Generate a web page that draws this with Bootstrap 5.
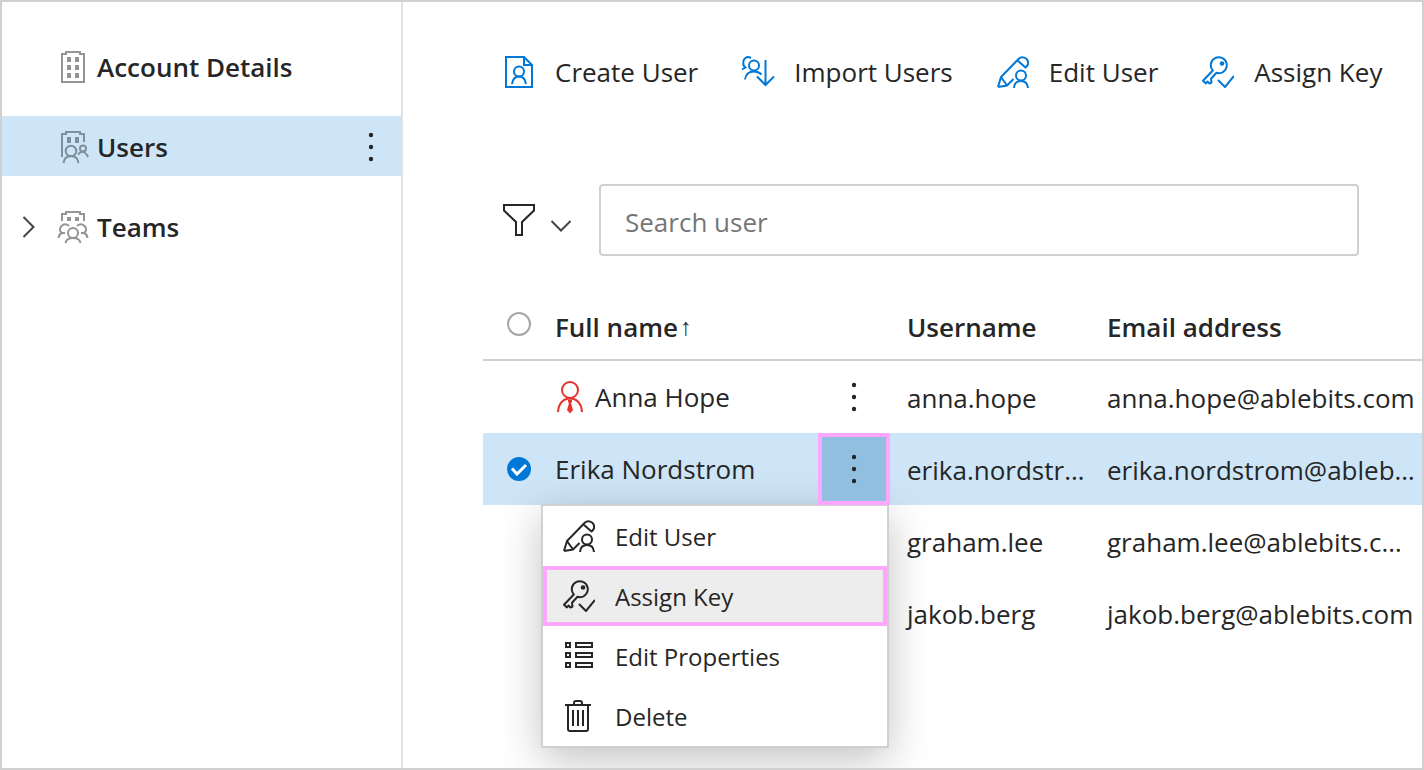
<!DOCTYPE html>
<html lang="en">
<head>
<meta charset="utf-8">
<meta name="viewport" content="width=device-width, initial-scale=1">
<title>Users</title>
<link href="https://cdn.jsdelivr.net/npm/bootstrap@5.3.0/dist/css/bootstrap.min.css" rel="stylesheet">
<style>
  :root { --ink: #262626; --line: #d0d0d0; --accent: #0078d7; --pick: #cde5f7; --mark: #ffa6ff; }
  body { font-family: "Open Sans", "Noto Sans", sans-serif; font-size: 26px; line-height: 36px; color: var(--ink); }
  .app-frame { border: 2px solid var(--line); min-height: 100vh; overflow: hidden; }
  .ico { width: 32px; height: 32px; flex: none; fill: none; stroke: currentColor; stroke-width: 2; overflow: visible; }
  .solid { fill: currentColor; stroke: none; }

  .side-pane { width: 401px; border-right: 2px solid #e2e2e2; padding-top: 34px; gap: 20px; }
  .side-item { height: 60px; padding: 2px 0 0 14px; color: var(--ink); text-decoration: none; font-weight: 600; }
  .side-item .ico { color: #949494; }
  .side-item .twisty { width: 24px; height: 24px; color: #444; margin-right: 17px; }
  .side-item.picked { background: var(--pick); }
  .side-item.picked .ico { color: #7f8f9b; }
  .side-item .label-text { margin-left: 8px; }

  .dots { background: none; border: 0; padding: 0; color: var(--ink); display: flex; align-items: center; justify-content: center; }
  .dots svg { width: 6px; height: 30px; fill: currentColor; }
  .side-row .dots { width: 60px; height: 60px; }

  .main-pane { padding: 44px 0 0 80px; min-width: 0; }
  .tool-bar { padding-left: 20px; gap: 44px; height: 52px; }
  .tool-btn { background: none; border: 0; padding: 0; color: var(--ink); gap: 20px; }
  .tool-btn .ico { color: var(--accent); }

  .filter-row { margin: 86px 63px 0 20px; }
  .filter-btn { background: none; border: 0; padding: 0; color: var(--ink); gap: 16px; width: 96px; }
  .filter-btn .arrow { width: 20px; height: 12px; color: #444; margin-top: 12px; }
  .search-box { height: 72px; border: 2px solid var(--line); border-radius: 4px; padding: 4px 24px 0; font-size: 26px; color: var(--ink); }
  .search-box::placeholder { color: #767676; opacity: 1; }

  .user-table { table-layout: fixed; width: 100%; margin-top: 32px; }
  .user-table th, .user-table td { height: 72px; padding: 0; vertical-align: middle; white-space: nowrap; }
  .user-table th { font-weight: 600; padding-top: 6px; }
  .user-table thead tr { border-bottom: 2px solid var(--line); }
  .user-table tr.picked { background: var(--pick); }
  .col-pick { width: 72px; } .col-name { width: 263px; } .col-menu { width: 72px; } .col-login { width: 217px; }
  .user-table .login { padding-left: 17px; }
  .user-table td.login, .user-table td.mail { padding-top: 2px; }
  .user-table .pick-cell { text-align: center; padding: 0; }
  .pick-cell input { appearance: none; display: block; margin: 0 auto; width: 24px; height: 24px; border: 2px solid #a6a6a6; border-radius: 50%; background: #fff; }
  .pick-cell input:checked { border-color: var(--accent); background: var(--accent) url("data:image/svg+xml,%3Csvg xmlns='http://www.w3.org/2000/svg' viewBox='0 0 20 20'%3E%3Cpath d='M3 9.500l5 5.500 9-9' fill='none' stroke='%23fff' stroke-width='3'/%3E%3C/svg%3E") center / 20px no-repeat; }
  .sort-mark { font-family: "Liberation Sans", sans-serif; font-size: 24px; line-height: 20px; font-weight: 400; margin-left: 2px; }
  .admin-mark { color: #e5332d; }

  .user-table .dots { width: 72px; height: 72px; }
  .dots.open { background: #91bfe0; border: 4px solid var(--mark); position: relative; z-index: 3; }
  .menu-pop { position: absolute; z-index: 2; top: 71px; right: 1px; width: 348px; background: #fff; border: 2px solid var(--line); box-shadow: 0 12px 40px rgba(0,0,0,.24); }
  .menu-pop button { display: flex; align-items: center; width: 100%; height: 60px; padding: 0 20px; gap: 20px; border: 0; background: none; color: var(--ink); font-size: 24px; }
  .menu-pop button span { padding-top: 2px; }
  .menu-pop button.marked { background: #ededed; outline: 4px solid var(--mark); outline-offset: -4px; }
</style>
</head>
<body>
<svg class="d-none" xmlns="http://www.w3.org/2000/svg">
  <symbol id="i-edit" viewBox="0 0 32 32">
    <path d="M1 31L4 21 21.500 3Q25-.5 29.300 2.700 33 7 29.500 10.500L28 12M20.500 4.500l8 7M4 21l6 8.500M1 31l9-1.500 6.500-6.500"/>
    <circle cx="24" cy="19.500" r="5"/><path d="M17 32q.5-7 7-7t7 7"/>
  </symbol>
  <symbol id="i-key" viewBox="0 0 32 32">
    <path d="M10.800 14.500A8 8 0 1 1 17 17.200l-2.500-.4-5.500 6 .5 3.700-2 1-2-2-1.500 2-3-2.800z" stroke-linejoin="round"/>
    <circle cx="20" cy="7.500" r="2.300" class="solid"/><path d="M16 24l7 7L32 20"/>
  </symbol>
  <symbol id="i-dots" viewBox="0 0 6 30"><circle cx="3" cy="3" r="2.200"/><circle cx="3" cy="15" r="2.200"/><circle cx="3" cy="27" r="2.200"/></symbol>
</svg>

<div class="app-frame d-flex">
  <nav class="side-pane d-flex flex-column flex-shrink-0">
    <a href="#" class="side-item d-flex align-items-center">
      <svg class="ico twisty"></svg>
      <svg class="ico" viewBox="0 0 32 32"><path d="M5 31V3h4V1h14v2h4v28z"/><path class="solid" d="M10 6h4v5h-4zM18 6h4v5h-4zM10 14h4v5h-4zM18 14h4v5h-4zM10 22h4v5h-4zM18 22h4v5h-4z"/></svg>
      <span class="label-text">Account Details</span>
    </a>
    <div class="side-row side-item picked d-flex align-items-center">
      <a href="#" class="d-flex align-items-center flex-grow-1 text-reset text-decoration-none">
        <svg class="ico twisty"></svg>
        <svg class="ico" viewBox="0 0 32 32"><path d="M5 26V3h4V1h14v2h4v8"/><path class="solid" d="M10 6h4v6h-4zM18 6h4v6h-4z"/><circle cx="14" cy="20" r="5.300"/><path d="M6.500 32q1-7 7.500-7t7.500 7"/><circle cx="26" cy="17.500" r="3"/><path d="M21 23.500q5-5.500 9 .5l1 2"/></svg>
        <span class="label-text">Users</span>
      </a>
      <button class="dots" type="button" aria-label="More"><svg><use href="#i-dots"/></svg></button>
    </div>
    <a href="#" class="side-item d-flex align-items-center">
      <svg class="ico twisty" viewBox="0 0 24 24"><path d="M7.500 2L17.500 12l-10 10"/></svg>
      <svg class="ico" viewBox="0 0 32 32"><path d="M5 10V3h4V1h14v2h4v7"/><path class="solid" d="M10 6h4v4h-4zM18 6h4v4h-4z"/><circle cx="16" cy="22" r="5"/><path d="M8.500 32q1-5 7.500-5t7.500 5M12 15Q8 11.500 4.500 15t.5 7h3M5 22q-3 1-3.500 5M20 15q4-3.500 7.500 0t-.5 7h-3M27 22q3 1 3.500 5"/></svg>
      <span class="label-text">Teams</span>
    </a>
  </nav>

  <main class="main-pane flex-grow-1">
    <div class="tool-bar d-flex align-items-center text-nowrap">
      <button type="button" class="tool-btn d-flex align-items-center">
        <svg class="ico" viewBox="0 0 32 32"><path d="M3 1h18l8 8v22H3zM21 1v8h8"/><circle cx="16" cy="15.500" r="5"/><path d="M9 28q1-7.500 7-7.500t7 7.500"/></svg>
        <span>Create User</span>
      </button>
      <button type="button" class="tool-btn d-flex align-items-center">
        <svg class="ico" viewBox="0 0 32 32"><path d="M9 2Q4-.5 1.800 4 0 9 3.500 11.500L0 13.500"/><circle cx="12" cy="9.500" r="5"/><path d="M3 23.500q1-8 9-8 4.500 0 7.500 3M23.500 4v25M15 20.500l8.500 8.500 8.500-8.500"/></svg>
        <span>Import Users</span>
      </button>
      <button type="button" class="tool-btn d-flex align-items-center"><svg class="ico"><use href="#i-edit"/></svg><span>Edit User</span></button>
      <button type="button" class="tool-btn d-flex align-items-center"><svg class="ico"><use href="#i-key"/></svg><span>Assign Key</span></button>
    </div>

    <div class="filter-row d-flex align-items-center">
      <button type="button" class="filter-btn d-flex align-items-center flex-shrink-0" aria-label="Filter">
        <svg class="ico" viewBox="0 0 32 32"><path d="M1 1h30v5.500L19 18v13h-6V18L1 6.500z"/></svg>
        <svg class="ico arrow" viewBox="0 0 20 12"><path d="M.5 1L10 10.500 19.500 1"/></svg>
      </button>
      <input type="text" class="search-box w-100" placeholder="Search user" aria-label="Search user">
    </div>

    <table class="user-table">
      <colgroup><col class="col-pick"><col class="col-name"><col class="col-menu"><col class="col-login"><col></colgroup>
      <thead>
        <tr>
          <th class="pick-cell"><input type="checkbox" aria-label="Select all"></th>
          <th><div class="d-flex align-items-center">Full name<span class="sort-mark">↑</span></div></th>
          <th></th>
          <th class="login">Username</th>
          <th>Email address</th>
        </tr>
      </thead>
      <tbody>
        <tr>
          <td></td>
          <td><div class="d-flex align-items-center gap-2"><svg class="ico admin-mark" viewBox="0 0 32 32"><circle cx="15" cy="9" r="8"/><path d="M3 31Q4 18 15 17.500 26 18 27 31"/><path class="solid" d="M13 19h4v2l-1 1 2 7-3 3.500-3-3.500 2-7-1-1z"/></svg><span>Anna Hope</span></div></td>
          <td><button class="dots" type="button" aria-label="More"><svg><use href="#i-dots"/></svg></button></td>
          <td class="login">anna.hope</td>
          <td class="mail">anna.hope@ablebits.com</td>
        </tr>
        <tr class="picked">
          <td class="pick-cell"><input type="checkbox" checked aria-label="Select Erika Nordstrom"></td>
          <td>Erika Nordstrom</td>
          <td class="position-relative">
            <button class="dots open" type="button" aria-label="More"><svg><use href="#i-dots"/></svg></button>
            <div class="menu-pop">
              <button type="button"><svg class="ico"><use href="#i-edit"/></svg><span>Edit User</span></button>
              <button type="button" class="marked"><svg class="ico"><use href="#i-key"/></svg><span>Assign Key</span></button>
              <button type="button"><svg class="ico" viewBox="0 0 32 32"><path d="M3 3h4v4H3zM13 3h16v4H13zM3 13h4v4H3zM13 13h16v4H13zM3 23h4v4H3zM13 23h16v4H13z"/></svg><span>Edit Properties</span></button>
              <button type="button"><svg class="ico" viewBox="0 0 32 32"><path d="M2 5h26M11 5V3q0-2 2-2h4q2 0 2 2v2M5 5v24q0 2 2 2h16q2 0 2-2V5M10 10v16M15 10v16M20 10v16"/></svg><span>Delete</span></button>
            </div>
          </td>
          <td class="login">erika.nordstr…</td>
          <td class="mail">erika.nordstrom@ableb…</td>
        </tr>
        <tr>
          <td></td><td></td><td></td>
          <td class="login">graham.lee</td>
          <td class="mail">graham.lee@ablebits.c…</td>
        </tr>
        <tr>
          <td></td><td></td><td></td>
          <td class="login">jakob.berg</td>
          <td class="mail">jakob.berg@ablebits.com</td>
        </tr>
      </tbody>
    </table>
  </main>
</div>
<script src="https://cdn.jsdelivr.net/npm/bootstrap@5.3.0/dist/js/bootstrap.bundle.min.js"></script>
</body>
</html>
